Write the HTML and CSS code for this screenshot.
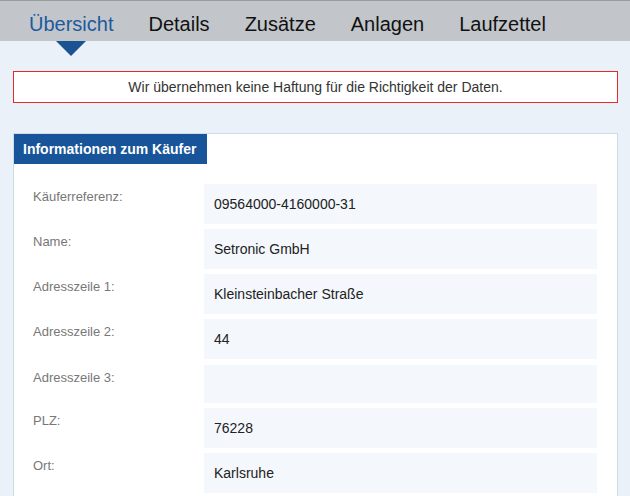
FILE: index.html
```html
<!DOCTYPE html>
<html lang="de">
<head>
<meta charset="utf-8">
<title>Übersicht</title>
<link rel="stylesheet" href="styles.css">
</head>
<body>
<nav class="tabs">
  <a class="tab active">Übersicht</a>
  <a class="tab">Details</a>
  <a class="tab">Zusätze</a>
  <a class="tab">Anlagen</a>
  <a class="tab">Laufzettel</a>
</nav>
<main class="content">
  <div class="notice">Wir übernehmen keine Haftung für die Richtigkeit der Daten.</div>
  <section class="card">
    <h2 class="card-title">Informationen zum Käufer</h2>
    <div class="rows">
      <div class="row"><div class="label">Käuferreferenz:</div><div class="value">09564000-4160000-31</div></div>
      <div class="row"><div class="label">Name:</div><div class="value">Setronic GmbH</div></div>
      <div class="row"><div class="label">Adresszeile 1:</div><div class="value">Kleinsteinbacher Straße</div></div>
      <div class="row"><div class="label">Adresszeile 2:</div><div class="value">44</div></div>
      <div class="row row-empty"><div class="label">Adresszeile 3:</div><div class="value"></div></div>
      <div class="row"><div class="label">PLZ:</div><div class="value">76228</div></div>
      <div class="row"><div class="label">Ort:</div><div class="value">Karlsruhe</div></div>
    </div>
  </section>
</main>
</body>
</html>
```

FILE: styles.css
```css
html, body {
  margin: 0;
  padding: 0;
}
body {
  background: #eaf1f9;
  font-family: "Liberation Sans", Arial, sans-serif;
  color: #222;
  overflow: hidden;
}
.tabs {
  display: flex;
  height: 41px;
  box-sizing: border-box;
  background: #c2c6ca;
  border-top: 1px solid #9a9c9e;
  padding: 12px 0 0 11.5px;
}
.tab {
  position: relative;
  padding: 0 17.5px;
  font-size: 20px;
  line-height: 23px;
  color: #111;
}
.tab.active {
  color: #1d5a9e;
}
.tab.active::after {
  content: "";
  position: absolute;
  left: 50%;
  top: 28px;
  margin-left: -15px;
  border-left: 15px solid transparent;
  border-right: 15px solid transparent;
  border-top: 15px solid #1b5392;
}
.content {
  padding: 30px 12px 0 13px;
}
.notice {
  background: #fff;
  border: 1px solid #e32a2a;
  text-align: center;
  font-size: 14px;
  line-height: 30px;
  color: #333;
}
.card {
  margin-top: 30px;
  background: #fff;
  border: 1px solid #cddde8;
  border-bottom: 0;
  padding-bottom: 20px;
}
.card-title {
  display: inline-block;
  margin: 0;
  background: #175499;
  color: #fff;
  font-size: 14px;
  font-weight: bold;
  line-height: 30px;
  padding: 0 11px 0 9px;
}
.rows {
  display: flex;
  flex-direction: column;
  gap: 5px;
  padding: 20px 20px 0 19px;
}
.row {
  display: flex;
}
.label {
  width: 171px;
  flex: none;
  font-size: 13px;
  line-height: 18px;
  padding-top: 4px;
  color: #777;
}
.value {
  flex: 1;
  height: 40px;
  line-height: 40px;
  font-size: 14px;
  padding-left: 10px;
  background: #f4f8fc;
  color: #222;
}
.row-empty {
  margin-top: 1px;
}
.row-empty .value {
  height: 38px;
}
```
